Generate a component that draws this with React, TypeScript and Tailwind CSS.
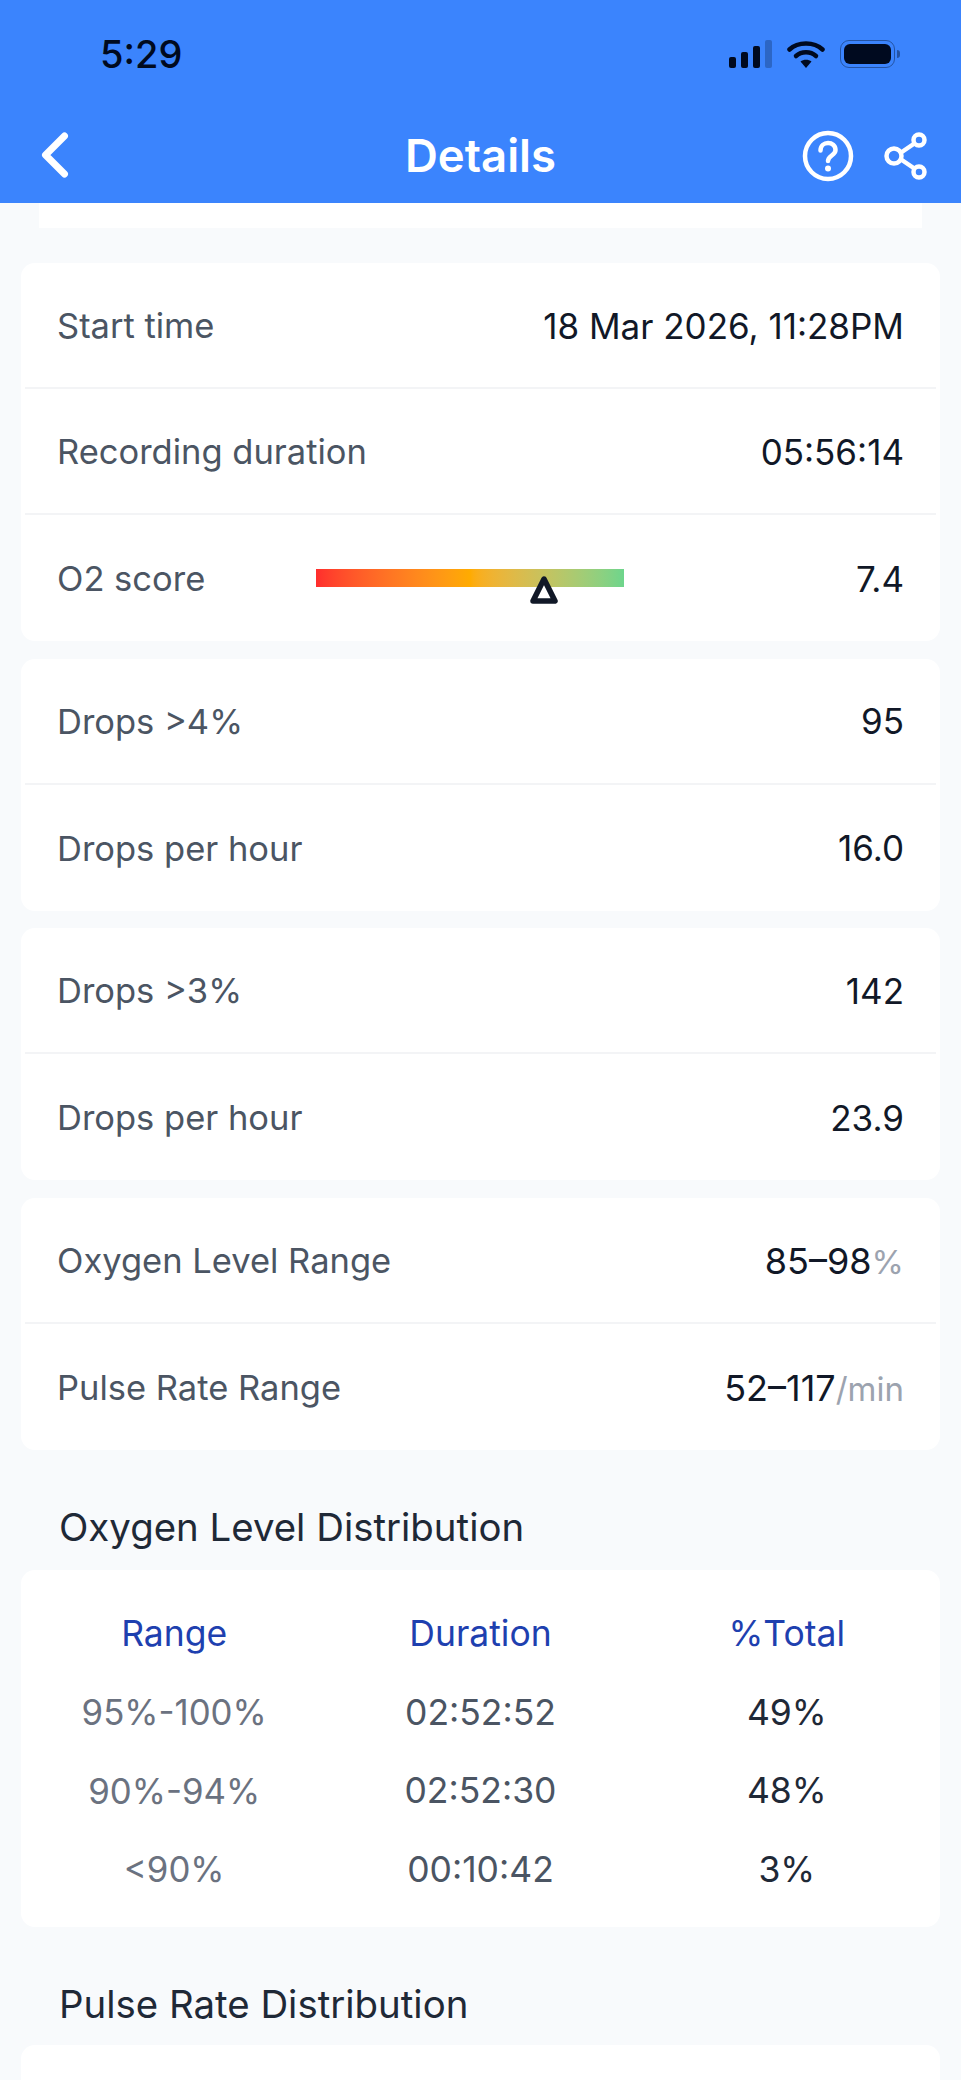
import { ChevronLeft } from 'lucide-react';

const font = { fontFamily: 'Inter, "Liberation Sans", sans-serif' };

function StatusIcons() {
    return (
        <div className="flex items-center">
            <svg width="44" height="28" viewBox="0 0 44 28" className="mr-[14px]">
                <rect x="0" y="17" width="7" height="11" rx="2" fill="#000a1f" />
                <rect x="12" y="12" width="7" height="16" rx="2" fill="#000a1f" />
                <rect x="24" y="6" width="7" height="22" rx="2" fill="#000a1f" />
                <rect x="36" y="0" width="7" height="28" rx="2" fill="#000a1f" fillOpacity="0.25" />
            </svg>
            <svg width="38" height="28" viewBox="0 0 38 28" className="mr-[15px]">
                <path d="M2.5 9.5C11 1.5 27 1.5 35.5 9.5" fill="none" stroke="#000a1f" strokeWidth="4.5" strokeLinecap="round" />
                <path d="M9 16C14.5 11 23.5 11 29 16" fill="none" stroke="#000a1f" strokeWidth="4.5" strokeLinecap="round" />
                <path d="M13.5 21.5C16.5 19 21.5 19 24.5 21.5L19 28Z" fill="#000a1f" />
            </svg>
            <div className="flex items-center">
                <div className="flex h-[28px] w-[55px] rounded-[9px] border border-[#000a1f]/40 p-[3px]">
                    <div className="flex-1 rounded-[6px] bg-[#000a1f]" />
                </div>
                <div className="ml-[2px] h-[8px] w-[3px] rounded-r-full bg-[#000a1f]/40" />
            </div>
        </div>
    );
}

function Row({ label, value, unit, wide, last }: { label: string; value?: string; unit?: string; wide?: boolean; last?: boolean }) {
    return (
        <div className={`mx-[4px] flex h-[126px] items-center justify-between pl-[32px] pr-[32px] pt-[2px] text-[34.5px] ${last ? '' : 'border-b-2 border-[#f3f4f6]'}`}>
            <span className="text-[#4b5563]">{label}</span>
            <span className={`text-[#111827] ${wide ? 'text-[36px]' : 'text-[35px]'}`}>
                {value}
                {unit && <span className="text-[33px] text-[#9ca3af]">{unit}</span>}
            </span>
        </div>
    );
}

function ScoreRow() {
    return (
        <div className="mx-[4px] flex h-[126px] items-center pl-[32px] pr-[32px] pt-[2px] text-[34.5px]">
            <span className="w-[259px] text-[#4b5563]">O2 score</span>
            <div className="relative -mt-[2px] h-[18px] w-[308px] bg-gradient-to-r from-[#ff2d2d] via-[#ffab00] to-[#6dd58c]">
                <svg width="30" height="28" viewBox="0 0 30 28" className="absolute left-[213px] top-[7px]">
                    <path d="M15 3L26 25H4Z" fill="white" stroke="#111827" strokeWidth="5.5" strokeLinejoin="round" />
                </svg>
            </div>
            <span className="ml-auto text-[35px] text-[#111827]">7.4</span>
        </div>
    );
}

function Card({ children, className = '' }: { children?: React.ReactNode; className?: string }) {
    return <div className={`rounded-[14px] bg-white ${className}`}>{children}</div>;
}

const oxygenRows = [
    ['95%-100%', '02:52:52', '49%'],
    ['90%-94%', '02:52:30', '48%'],
    ['<90%', '00:10:42', '3%'],
];

function Distribution() {
    return (
        <Card className="h-[357px] pt-[25px]">
            <div className="grid grid-cols-3 text-center text-[35.5px]">
                {['Range', 'Duration', '%Total'].map((h) => (
                    <div key={h} className="flex h-[78.5px] items-center justify-center text-[#1e40af]">{h}</div>
                ))}
                {oxygenRows.map((r) => (
                    <div key={r[0]} className="contents">
                        <div className="flex h-[78.5px] items-center justify-center text-[34.8px] text-[#6b7280]">{r[0]}</div>
                        <div className="flex h-[78.5px] items-center justify-center text-[#4b5563]">{r[1]}</div>
                        <div className="flex h-[78.5px] items-center justify-center text-[#1f2937]">{r[2]}</div>
                    </div>
                ))}
            </div>
        </Card>
    );
}

export default function App() {
    return (
        <div className="h-[2080px] w-[961px] overflow-hidden bg-[#f8fafc]" style={font}>
            <header className="h-[203px] bg-[#3b84fd]">
                <div className="flex h-[108px] items-center justify-between pl-[100px] pr-[61px]">
                    <span className="text-[38px] font-medium text-[#000a1f]">5:29</span>
                    <StatusIcons />
                </div>
                <div className="grid grid-cols-[1fr_auto_1fr] items-center px-[33px] pt-[14px]">
                    <ChevronLeft size={76} strokeWidth={2.2} color="white" className="-my-[10px] -ml-[16px] -mt-[13px]" />
                    <span className="text-[45.5px] font-semibold text-white">Details</span>
                    <div className="flex items-center justify-end gap-[30px]">
                        <svg width="52" height="52" viewBox="0 0 52 52">
                            <circle cx="26" cy="26" r="23" fill="none" stroke="white" strokeWidth="4.5" />
                            <path d="M18.5 20.5C18.5 10.5 33.5 10.5 33.5 20C33.5 25.5 26 25.5 26 31" fill="none" stroke="white" strokeWidth="4.5" strokeLinecap="round" />
                            <circle cx="26" cy="38.5" r="3" fill="white" />
                        </svg>
                        <svg width="44" height="48" viewBox="0 0 44 48">
                            <line x1="12" y1="24" x2="34" y2="9" stroke="white" strokeWidth="4.5" />
                            <line x1="12" y1="24" x2="34" y2="39" stroke="white" strokeWidth="4.5" />
                            <circle cx="10" cy="24" r="7.5" fill="#3b84fd" stroke="white" strokeWidth="4.5" />
                            <circle cx="35" cy="8" r="5.5" fill="#3b84fd" stroke="white" strokeWidth="4.5" />
                            <circle cx="35" cy="40" r="5.5" fill="#3b84fd" stroke="white" strokeWidth="4.5" />
                        </svg>
                    </div>
                </div>
            </header>

            <div className="mx-[39px] h-[25px] bg-white" />

            <main className="flex flex-col gap-[17.5px] px-[21px] pt-[35px]">
                <Card>
                    <Row label="Start time" value="18 Mar 2026, 11:28PM" />
                    <Row label="Recording duration" value="05:56:14" />
                    <ScoreRow />
                </Card>
                <Card>
                    <Row label="Drops >4%" value="95" />
                    <Row label="Drops per hour" value="16.0" last />
                </Card>
                <Card>
                    <Row label="Drops >3%" value="142" />
                    <Row label="Drops per hour" value="23.9" last />
                </Card>
                <Card>
                    <Row label="Oxygen Level Range" value="85–98" unit="%" wide />
                    <Row label="Pulse Rate Range" value="52–117" unit="/min" wide last />
                </Card>
            </main>

            <h2 className="h-[120px] px-[59px] pt-[50px] text-[38.4px] font-[420] leading-[54px] text-[#1f2937]">Oxygen Level Distribution</h2>
            <div className="px-[21px]">
                <Distribution />
            </div>
            <h2 className="h-[118px] px-[59px] pt-[50px] text-[38.4px] font-[420] leading-[54px] text-[#1f2937]">Pulse Rate Distribution</h2>
            <div className="px-[21px]">
                <Card className="h-[60px]" />
            </div>
        </div>
    );
}
